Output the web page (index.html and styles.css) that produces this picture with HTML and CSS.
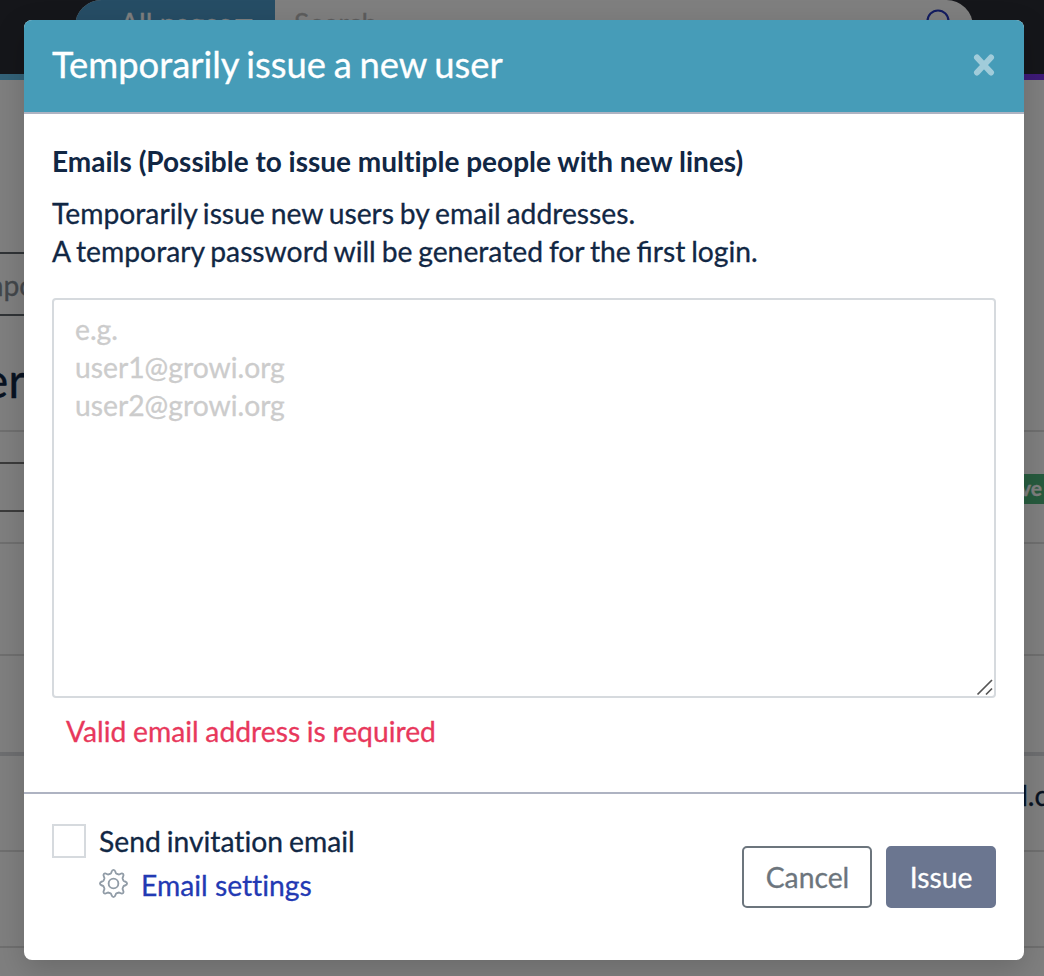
FILE: index.html
```html
<!DOCTYPE html>
<html lang="en">
<head>
<meta charset="utf-8">
<title>Temporarily issue a new user</title>
<link rel="stylesheet" href="styles.css">
</head>
<body>
<div class="page">
  <header class="navbar">
    <div class="search">
      <div class="search-scope">All pages <span class="caret"></span></div>
      <div class="search-input">Search...</div>
      <svg class="search-icon" viewBox="0 0 32 32" width="32" height="32"><circle cx="12" cy="12" r="10.5"/><path d="M19.500 19.500L29 29"/></svg>
    </div>
  </header>
  <main class="admin">
    <div class="tab"><span>Tempo</span></div>
    <h2 class="heading">User</h2>
    <div class="filter">
      <div class="filter-input"></div>
      <span class="badge">Active</span>
    </div>
    <div class="row row-a"></div>
    <div class="row row-b"></div>
    <div class="row row-c"><span>mail.com</span></div>
    <div class="row row-d"></div>
  </main>
</div>
<div class="backdrop">
  <section class="modal" role="dialog">
    <header class="modal-header">
      <h1 class="modal-title">Temporarily issue a new user</h1>
      <svg class="close" viewBox="0 0 22 24" width="22" height="24"><path d="M4 4.500L18 19.500M18 4.500L4 19.500"/></svg>
    </header>
    <div class="modal-body">
      <label class="label" for="emails">Emails (Possible to issue multiple people with new lines)</label>
      <p class="help">Temporarily issue new users by email addresses.<br>A temporary password will be generated for the first login.</p>
      <div class="field">
        <textarea id="emails" class="emails" placeholder="e.g.&#10;user1@growi.org&#10;user2@growi.org"></textarea>
        <svg class="grip" viewBox="0 0 18 18" width="18" height="18"><path d="M1.500 16.500L16 2M10 16.500L16 10.500"/></svg>
      </div>
      <p class="error">Valid email address is required</p>
    </div>
    <footer class="modal-footer">
      <div class="options">
        <div class="check-line"><span class="checkbox"></span><span class="check-text">Send invitation email</span></div>
        <div class="settings-line">
          <svg class="gear" viewBox="-14 -14 28 28" width="29" height="29"><path d="M-2.800-9.600C-1.600-10.200-2.200-13.100 0-13.100C2.200-13.100 1.600-10.200 2.800-9.600L4.810-8.770C6.080-8.340 7.710-10.820 9.260-9.260C10.820-7.710 8.340-6.080 8.770-4.810L9.600-2.800C10.200-1.600 13.100-2.200 13.100 0C13.100 2.200 10.200 1.600 9.600 2.800L8.770 4.810C8.340 6.080 10.820 7.710 9.260 9.260C7.710 10.820 6.080 8.340 4.810 8.770L2.800 9.600C1.600 10.200 2.200 13.100 0 13.100C-2.200 13.100-1.600 10.200-2.800 9.600L-4.810 8.770C-6.080 8.340-7.710 10.820-9.260 9.260C-10.820 7.710-8.340 6.080-8.770 4.810L-9.600 2.800C-10.200 1.600-13.100 2.200-13.100 0C-13.100-2.200-10.200-1.600-9.600-2.800L-8.770-4.810C-8.340-6.080-10.820-7.710-9.260-9.260C-7.710-10.820-6.080-8.340-4.810-8.770Z"/><circle r="4.700"/></svg>
          <a class="link">Email settings</a>
        </div>
      </div>
      <div class="actions">
        <button class="btn cancel">Cancel</button>
        <button class="btn issue">Issue</button>
      </div>
    </footer>
  </section>
</div>
</body>
</html>
```

FILE: styles.css
```css
* { box-sizing: border-box; }
body {
  margin: 0;
  width: 1044px;
  height: 976px;
  position: relative;
  overflow: hidden;
  background: #fff;
  color: #112744;
  font: 28.28px/38px Lato, sans-serif;
  font-variant-ligatures: none;
  -webkit-text-stroke: .3px;
}
h1, h2, p { margin: 0; }
.page { height: 976px; overflow: hidden; }

/* Page behind the dialog */
.navbar {
  height: 80px;
  padding: 0 71px 0 75px;
  background: #2b2d35;
  border-bottom: 6px solid;
  border-image: linear-gradient(90deg, #66c4f0, #66c4f0 5%, #7c34f0) 1;
}
.search {
  display: flex;
  height: 53px;
  padding-right: 15px;
  background: #fff;
  border-radius: 0 40px 40px 0;
  border-top-left-radius: 40px;
  overflow: hidden;
}
.search-scope {
  width: 200px;
  padding: 4px 0 0 45px;
  background: #4c9bcb;
  color: #fff;
  white-space: nowrap;
}
.caret {
  display: inline-block;
  border: 9px solid transparent;
  border-top: 9px solid #fff;
  border-bottom: 0;
  margin-left: -3px;
  vertical-align: 6px;
}
.search-input { flex: 1; padding: 4px 0 0 19px; color: #bbb; }
.search-icon { margin-top: 9px; fill: none; stroke: #2438c0; stroke-width: 2; }
.admin { padding-top: 172px; }
.tab {
  display: flex;
  width: 110px;
  height: 64px;
  padding: 12px 0 0;
  margin-left: -55px;
  border: 2px solid #60666c;
  color: #868e96;
}
.tab span { margin-left: 5px; }
.heading {
  height: 114px;
  padding-top: 39px;
  margin-left: -72px;
  font-size: 48px;
  font-weight: 400;
  line-height: 50px;
  -webkit-text-stroke: .3px;
}
.filter {
  display: flex;
  justify-content: space-between;
  height: 114px;
  padding: 30px 0 0;
  border-top: 2px solid #dedede;
  border-bottom: 2px solid #dedede;
}
.filter-input { width: 60px; height: 50px; border: 2px solid #777; border-left: 0; }
.badge {
  height: 30px;
  margin: 12px 0 0;
  padding: 0 2px 0 10px;
  background: #4fb67c;
  color: #fff;
  font-size: 21px;
  font-weight: 700;
  line-height: 28px;
}
.row { display: flex; justify-content: flex-end; border-bottom: 2px solid #dedede; }
.row-a { height: 112px; }
.row-b { height: 100px; border-bottom: 4px solid #dadde0; }
.row-c { height: 96px; padding-top: 20px; }
.row-c span { margin-right: -43px; }
.row-d { height: 96px; }

/* Dialog */
.backdrop { position: absolute; inset: 0; padding: 20px 20px 16px 24px; background: rgba(0, 0, 0, .5); }
.modal {
  display: flex;
  flex-direction: column;
  height: 940px;
  border-radius: 8px;
  overflow: hidden;
  background: #fff;
  box-shadow: 0 10px 30px rgba(0, 0, 0, .17);
}
.modal-header {
  display: flex;
  justify-content: space-between;
  height: 94px;
  padding: 20px 29px 0 28px;
  background: #469cb8;
  border-bottom: 2px solid #aeb3c2;
  color: #fff;
}
.modal-title { font-size: 36.4px; font-weight: 400; line-height: 48px; white-space: nowrap; word-spacing: -1.7px; }
.close { margin-top: 13px; fill: none; stroke: #a1ccda; stroke-width: 6; stroke-linecap: round; }
.modal-body { height: 678px; padding: 28px 28px 0; }
.label { display: block; margin-bottom: 14px; font-size: 28px; font-weight: 700; white-space: nowrap; -webkit-text-stroke: 0; }
.help { margin-bottom: 28px; white-space: nowrap; word-spacing: -1.4px; font-variant-ligatures: normal; }
.field { position: relative; height: 400px; }
.emails {
  display: block;
  width: 100%;
  height: 400px;
  padding: 10px 21px;
  border: 2px solid #d6dade;
  border-radius: 4px;
  background: #fff;
  font: inherit;
  resize: none;
}
.emails::placeholder { color: #ccc; opacity: 1; }
.grip { position: absolute; right: 2px; bottom: 2px; fill: none; stroke: #555; stroke-width: 1.7; }
.error { padding: 14px 0 0 14px; color: #e8385c; word-spacing: -.6px; }
.modal-footer {
  display: flex;
  justify-content: space-between;
  height: 168px;
  padding: 30px 28px 0;
  border-top: 2px solid #aeb3c2;
}
.check-line { display: flex; gap: 13px; height: 38px; line-height: 34px; }
.check-text { word-spacing: -1.3px; }
.checkbox { width: 34px; height: 34px; border: 2px solid #d6dade; }
.settings-line { display: flex; gap: 13px; padding: 4px 0 0 47px; }
.gear { margin-top: 3px; fill: none; stroke: #919ca7; stroke-width: 1.8; }
.link { color: #2239b3; }
.actions { display: flex; gap: 14px; padding-top: 22px; }
.btn {
  height: 62px;
  padding: 0;
  border: 2px solid;
  border-radius: 5px;
  font: inherit;
}
.cancel { width: 130px; padding-left: 1px; border-color: #6c757d; background: #fff; color: #6c757d; }
.issue { width: 110px; border-color: #6b7690; background: #6b7690; color: #fff; }
```
